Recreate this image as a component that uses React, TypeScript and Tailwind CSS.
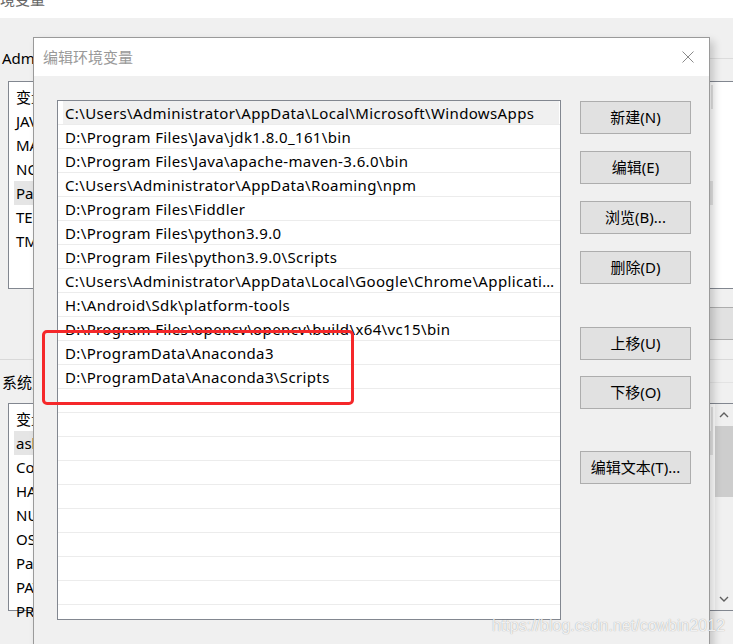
import React from "react";

const FONT = { fontFamily: '"Noto Sans", "Noto Sans CJK SC", sans-serif' };

const userVars = ["变量", "JAVA_HOME", "MAVEN_HOME", "NODE_PATH", "Path", "TEMP", "TMP"];
const sysVars = ["变量", "asl.log", "ComSpec", "HADOOP_HOME", "NUMBER_OF_PROCESSORS", "OS", "Path", "PATHEXT", "PROCESSOR_ARCHITECTURE"];

const paths = [
  "C:\\Users\\Administrator\\AppData\\Local\\Microsoft\\WindowsApps",
  "D:\\Program Files\\Java\\jdk1.8.0_161\\bin",
  "D:\\Program Files\\Java\\apache-maven-3.6.0\\bin",
  "C:\\Users\\Administrator\\AppData\\Roaming\\npm",
  "D:\\Program Files\\Fiddler",
  "D:\\Program Files\\python3.9.0",
  "D:\\Program Files\\python3.9.0\\Scripts",
  "C:\\Users\\Administrator\\AppData\\Local\\Google\\Chrome\\Application",
  "H:\\Android\\Sdk\\platform-tools",
  "D:\\Program Files\\opencv\\opencv\\build\\x64\\vc15\\bin",
  "D:\\ProgramData\\Anaconda3",
  "D:\\ProgramData\\Anaconda3\\Scripts",
  "", "", "", "", "", "", "", "", "", ""
];

function BgList({ items, selected, scroll }: { items: string[]; selected: number; scroll?: boolean }) {
  return (
    <div className="ml-[8px] w-[760px] h-[208px] border border-[#828790] bg-white flex">
      <div className="w-[704px] pt-[3px] shrink-0">
        {items.map((t, i) => (
          <div
            key={i}
            className={`h-[24px] flex items-center ml-[5px] pl-[2px] pt-[1px] text-[15px] text-black whitespace-nowrap ${
              i === selected ? "bg-[#e5e5e5]" : ""
            } ${i === 0 ? "border-r-2 border-[#e3e3e3]" : ""}`}
          >
            {t}
          </div>
        ))}
      </div>
      {scroll ? (
        <div className="ml-[2px] w-[18px] bg-[#f0f0f0] flex flex-col items-center">
          <div className="h-[22px] flex items-center justify-center">
            <svg width="10" height="6" viewBox="0 0 10 6"><path d="M1 5 L5 1 L9 5" fill="none" stroke="#606060" strokeWidth="1.4" /></svg>
          </div>
          <div className="w-full h-[71px] bg-[#cdcdcd]" />
          <div className="flex-1" />
          <div className="h-[22px] flex items-center justify-center">
            <svg width="10" height="6" viewBox="0 0 10 6"><path d="M1 1 L5 5 L9 1" fill="none" stroke="#606060" strokeWidth="1.4" /></svg>
          </div>
        </div>
      ) : null}
    </div>
  );
}

function Btn({ label, className }: { label: string; className?: string }) {
  return (
    <div
      className={`w-[111px] h-[33px] border border-[#adadad] bg-[#e1e1e1] flex items-center justify-center text-[15px] text-black ${className ?? ""}`}
    >
      {label}
    </div>
  );
}

export default function App() {
  return (
    <div className="relative w-[733px] h-[644px] overflow-hidden bg-[#f0f0f0]" style={FONT}>
      {/* background window */}
      <div className="h-[18px] bg-white overflow-hidden">
        <div className="mt-[-10px] leading-[18px] text-[15px] text-[#666] pl-0">境变量</div>
      </div>
      <div className="h-[29px]" />
      <div className="h-[22px] flex items-center">
        <span className="pl-[2px] pr-[6px] text-[15px] text-black whitespace-nowrap">Administrator 的用户变量(U)</span>
        <div className="flex-1 h-px bg-[#dcdcdc]" />
      </div>
      <div className="h-[12px]" />
      <BgList items={userVars} selected={4} />
      <div className="h-[18px]" />
      <div className="ml-[640px] w-[120px] h-[33px] border border-[#adadad] bg-[#e1e1e1]" />
      <div className="h-[19px]" />
      <div className="h-px bg-[#d9d9d9]" />
      <div className="h-[11px]" />
      <div className="h-[22px] flex items-center">
        <span className="pl-[2px] pr-[6px] text-[15px] text-black whitespace-nowrap">系统变量(S)</span>
        <div className="flex-1 h-px bg-[#e3e3e3]" />
      </div>
      <div className="h-[10px]" />
      <BgList items={sysVars} selected={1} scroll />

      {/* dialog */}
      <div className="absolute left-[33px] top-[37px] w-[677px] h-[640px] border border-[#9a9a9a] bg-[#f0f0f0] shadow-[4px_4px_8px_rgba(0,0,0,0.18)] flex flex-col">
        <div className="h-[38px] bg-white flex items-center justify-between pl-[9px] pr-[15px]">
          <span className="text-[15px] text-[#999999]">编辑环境变量</span>
          <svg width="12" height="12" viewBox="0 0 12 12">
            <path d="M0.5 0.5 L11.5 11.5 M11.5 0.5 L0.5 11.5" stroke="#8a8a8a" strokeWidth="1" />
          </svg>
        </div>
        <div className="flex pl-[23px] pt-[24px]">
          <div className="w-[504px] h-[520px] border border-[#828790] bg-white overflow-hidden">
            {paths.map((p, i) => (
              <div key={i} className="h-[24px] border-b border-[#ececec] flex">
                <div
                  className={`w-[496px] ml-[5px] pl-[2px] pr-[4px] pt-[2px] leading-[21px] text-[15px] tracking-[0.37px] text-black truncate ${
                    i === 0 ? "bg-[#f0f0f0]" : ""
                  }`}
                >
                  {p}
                </div>
              </div>
            ))}
          </div>
          <div className="ml-[19px] pt-[1px] flex flex-col">
            <Btn label="新建(N)" />
            <Btn label="编辑(E)" className="mt-[17px]" />
            <Btn label="浏览(B)..." className="mt-[17px]" />
            <Btn label="删除(D)" className="mt-[17px]" />
            <Btn label="上移(U)" className="mt-[43px]" />
            <Btn label="下移(O)" className="mt-[16px]" />
            <Btn label="编辑文本(T)..." className="mt-[42px]" />
          </div>
        </div>
      </div>

      {/* red annotation */}
      <div className="absolute left-[42px] top-[330px] w-[312px] h-[75px] border-[3px] border-[#f5282a] rounded-[5px]" />

      {/* watermark */}
      <div
        className="absolute left-[492px] top-[614px] text-[16px] text-white/85 [text-shadow:0_0_1px_rgba(0,0,0,0.4)] whitespace-nowrap"
        style={{ fontFamily: '"Liberation Sans", sans-serif' }}
      >
        https://blog.csdn.net/cowbin2012
      </div>
    </div>
  );
}
